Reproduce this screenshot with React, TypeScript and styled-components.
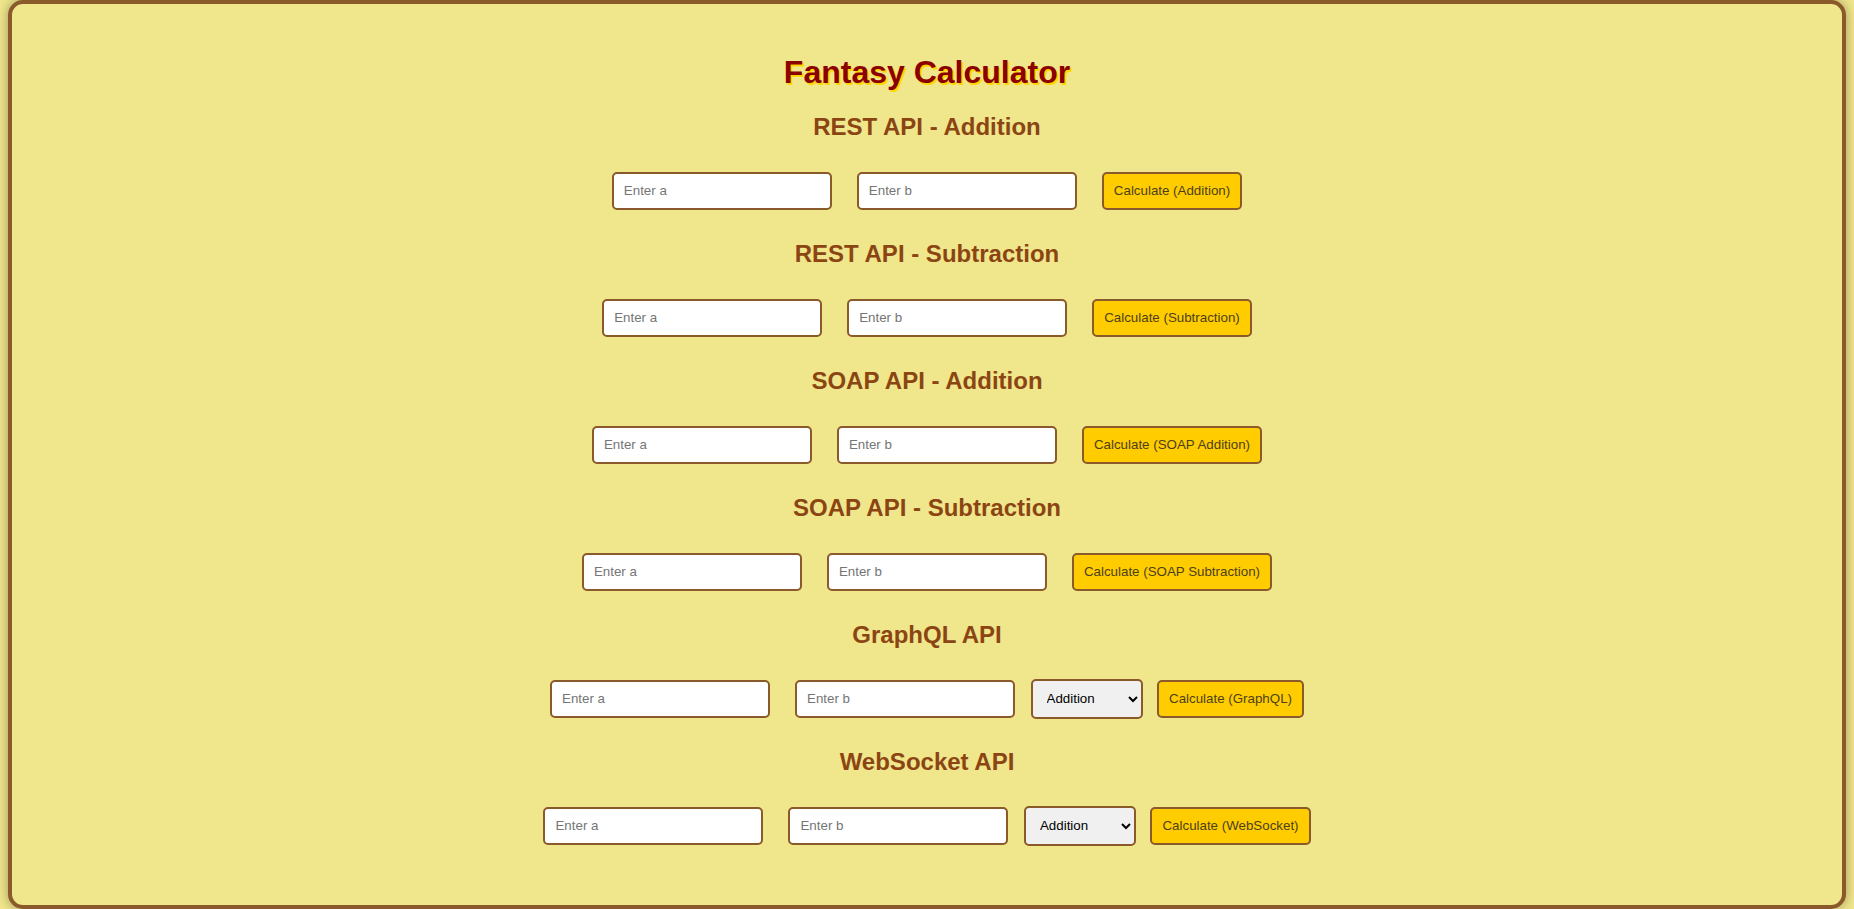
import styled, { createGlobalStyle } from "styled-components";
import { useState } from "react";

const EstiloGlobal = createGlobalStyle`
  html, body {
    margin: 0;
    padding: 0;
    background-color: #f0e68c;
    font-family: "Liberation Sans", Arial, sans-serif;
  }
`;

const Moldura = styled.div`
  box-sizing: border-box;
  height: 100vh;
  margin: 0 8px;
  padding-top: 50px;
  background-color: #f0e68c;
  border: 4px solid #8b5a2b;
  border-radius: 15px;
  box-shadow: 0 0 12px rgba(0, 0, 0, 0.35);
  display: flex;
  flex-direction: column;
  align-items: center;
`;

const Titulo = styled.h1`
  margin: 0 0 22.5px;
  font-size: 32px;
  line-height: 36px;
  font-weight: 700;
  color: #8b0000;
  text-shadow: 2px 2px #ffd700;
`;

const Secao = styled.section`
  display: flex;
  flex-direction: column;
  align-items: center;
  margin-bottom: 29.5px;
`;

const Subtitulo = styled.h2`
  margin: 0 0 32px;
  font-size: 24px;
  line-height: 27px;
  font-weight: 700;
  color: #8b4513;
`;

const Linha = styled.div`
  display: flex;
  align-items: center;
  justify-content: center;
  height: 38.5px;
`;

const Campo = styled.input`
  box-sizing: border-box;
  width: 220px;
  height: 38.5px;
  margin: 0 12.5px;
  padding: 0 10px;
  border: 2px solid #8b5a2b;
  border-radius: 5px;
  background: #fff;
  font-family: "Liberation Sans", Arial, sans-serif;
  font-size: 13.33px;
  outline: none;

  &::placeholder {
    color: #757575;
  }
`;

const Seletor = styled.select`
  box-sizing: border-box;
  width: 112px;
  height: 40.5px;
  margin: 0 2px 0 3px;
  padding: 0 6px 0 10px;
  border: 2px solid #8b5a2b;
  border-radius: 5px;
  background-color: #f0f0f0;
  color: #000;
  font-family: "Liberation Sans", Arial, sans-serif;
  font-size: 13.33px;
`;

const Botao = styled.button`
  box-sizing: border-box;
  height: 38.5px;
  margin: 0 12.5px;
  padding: 0 10px;
  border: 2px solid #8b5a2b;
  border-radius: 5px;
  background-color: #ffcc00;
  color: #4d3f1c;
  font-family: "Liberation Sans", Arial, sans-serif;
  font-size: 13.33px;
  cursor: pointer;
`;

interface PropsCalculo {
    titulo: string
    rotulo: string
    comOperacao?: boolean
}

function Calculo({ titulo, rotulo, comOperacao }: PropsCalculo) {
    const [a, setA] = useState('');
    const [b, setB] = useState('');
    const [operacao, setOperacao] = useState('add');

    return (
        <Secao>
            <Subtitulo>{titulo}</Subtitulo>
            <Linha>
                <Campo type="number" placeholder="Enter a" value={a} onChange={(e) => setA(e.target.value)} />
                <Campo type="number" placeholder="Enter b" value={b} onChange={(e) => setB(e.target.value)} />
                {comOperacao && (
                    <Seletor value={operacao} onChange={(e) => setOperacao(e.target.value)}>
                        <option value="add">Addition</option>
                        <option value="subtract">Subtraction</option>
                    </Seletor>
                )}
                <Botao>{rotulo}</Botao>
            </Linha>
        </Secao>
    )
}

export default function App() {
    return (
        <>
        <EstiloGlobal />
        <Moldura>
            <Titulo>Fantasy Calculator</Titulo>
            <Calculo titulo="REST API - Addition" rotulo="Calculate (Addition)" />
            <Calculo titulo="REST API - Subtraction" rotulo="Calculate (Subtraction)" />
            <Calculo titulo="SOAP API - Addition" rotulo="Calculate (SOAP Addition)" />
            <Calculo titulo="SOAP API - Subtraction" rotulo="Calculate (SOAP Subtraction)" />
            <Calculo titulo="GraphQL API" rotulo="Calculate (GraphQL)" comOperacao />
            <Calculo titulo="WebSocket API" rotulo="Calculate (WebSocket)" comOperacao />
        </Moldura>
        </>
    )
}
